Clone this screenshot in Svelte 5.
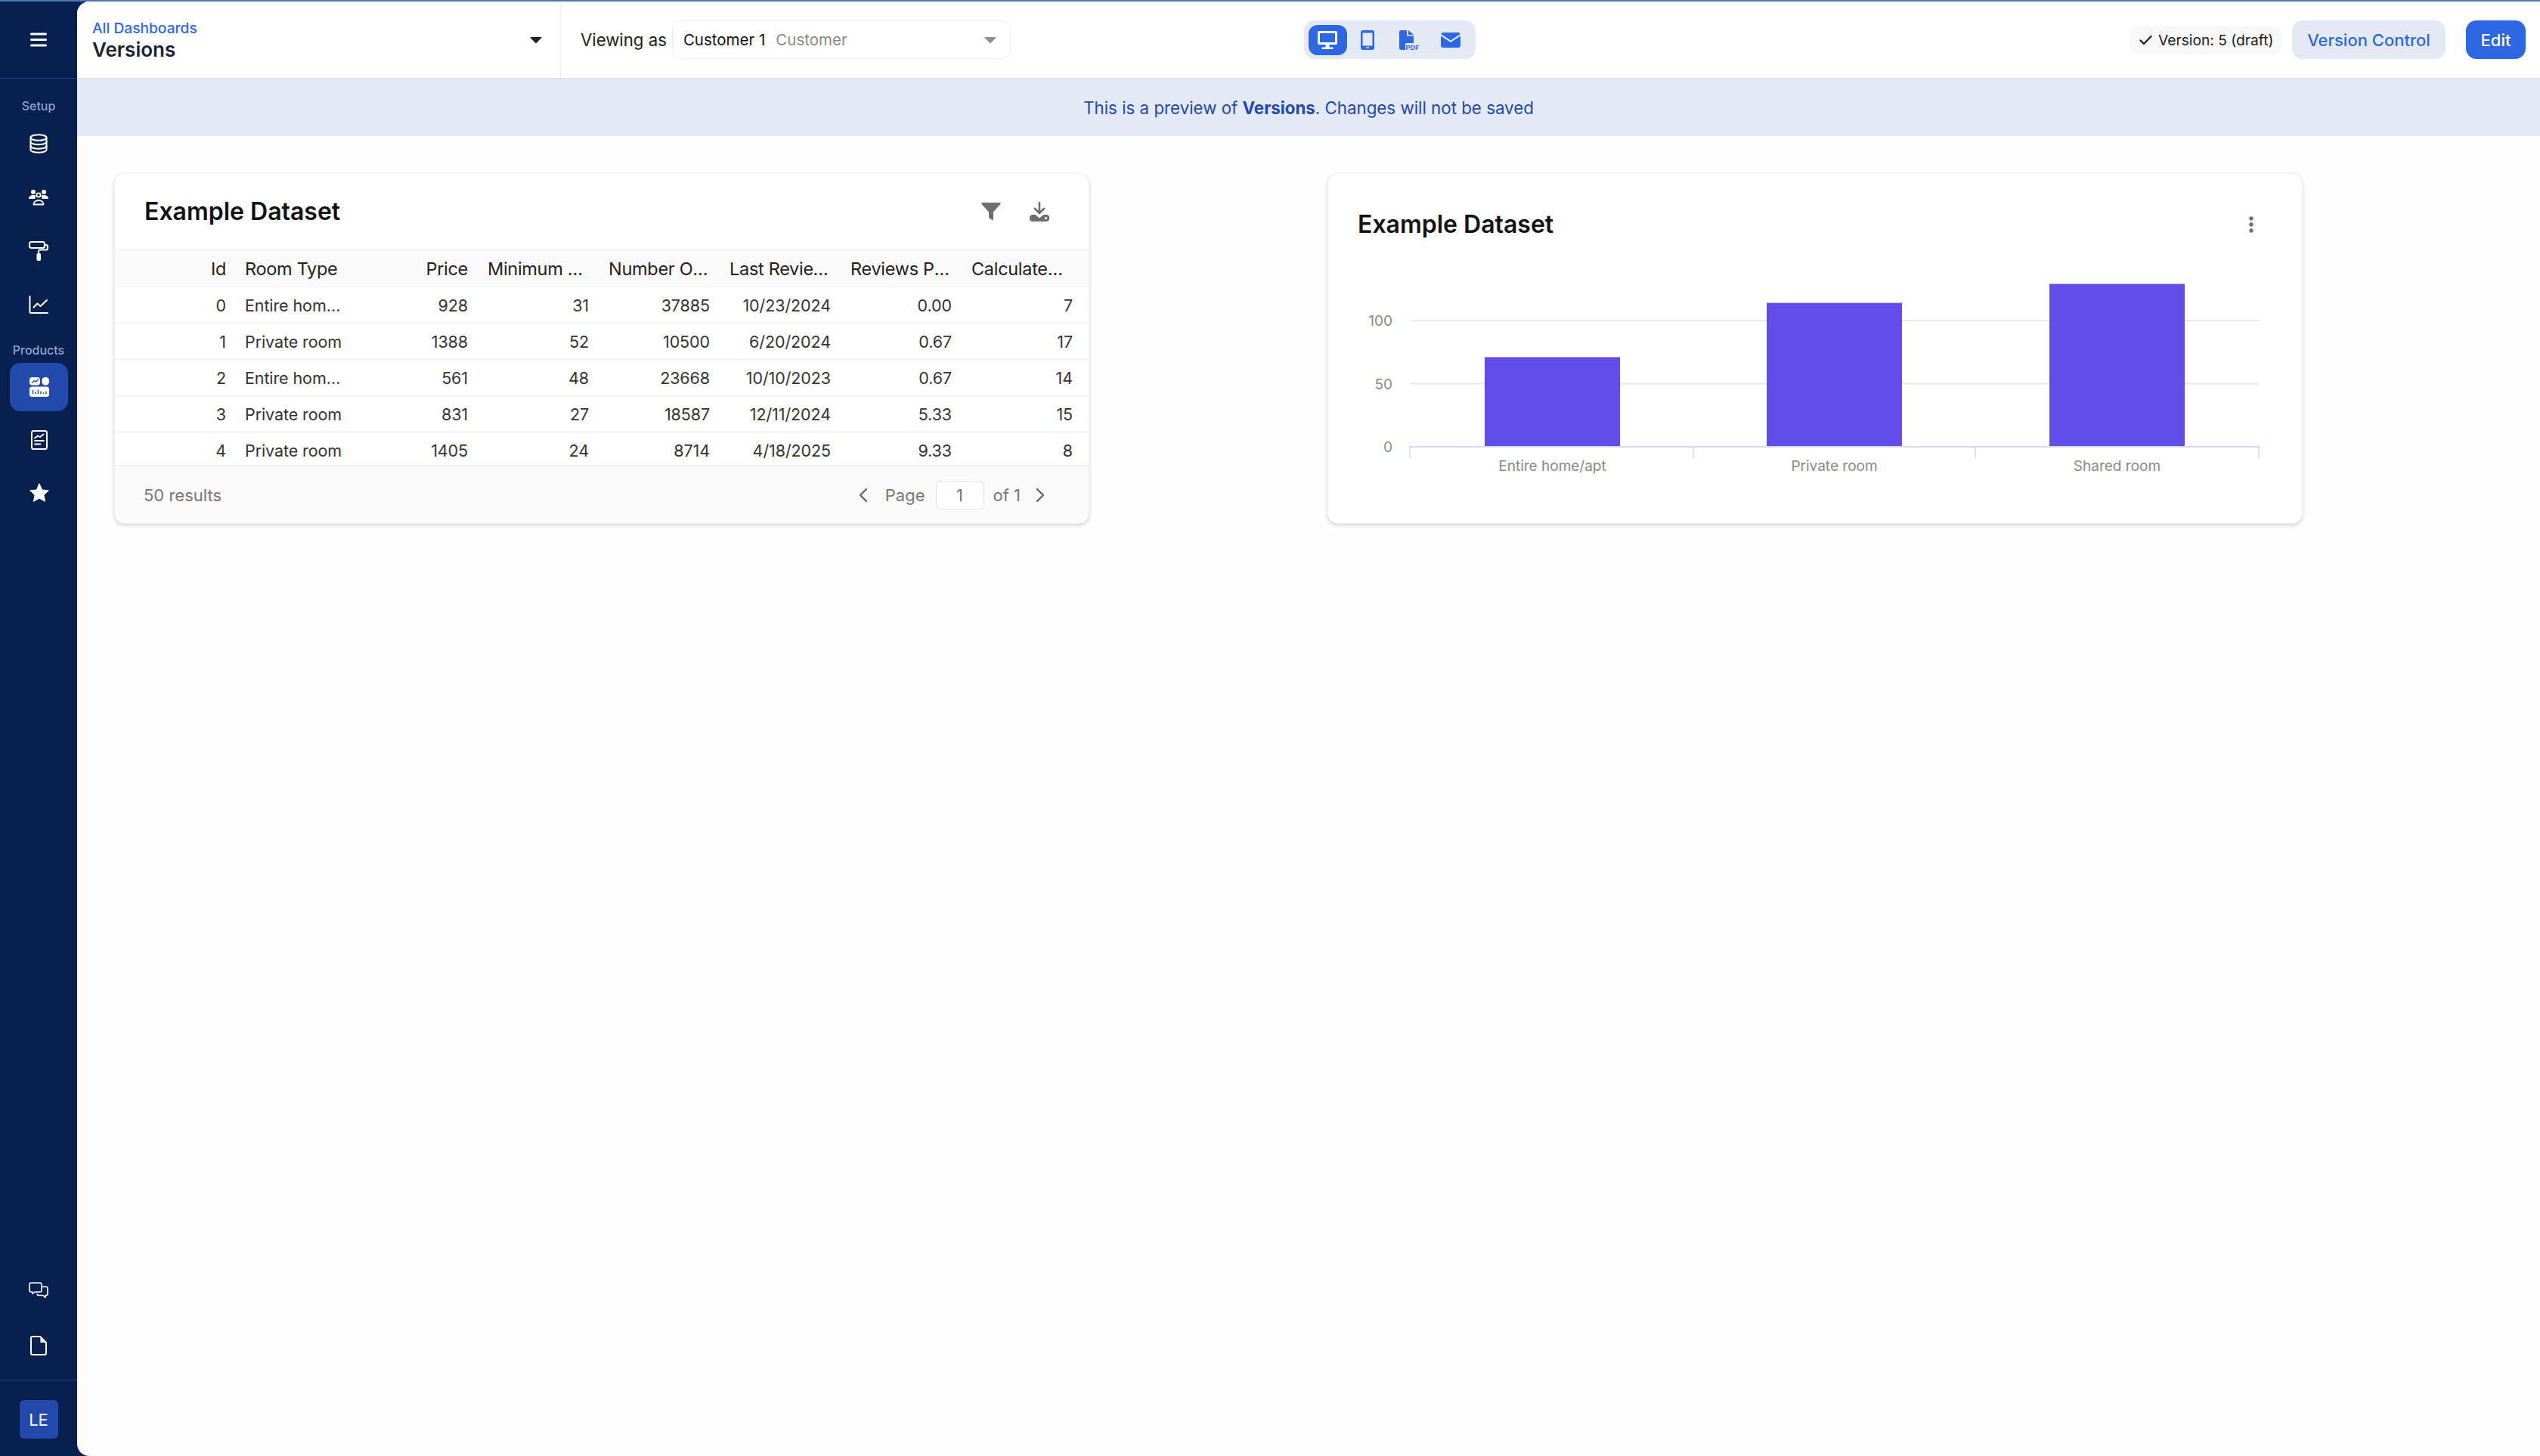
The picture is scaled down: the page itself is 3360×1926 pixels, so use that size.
<script lang="ts">
  const setupNav = ['db', 'people', 'roller', 'chart'];
  const productNav = ['dash', 'report', 'star'];

  const columns = [
    { label: 'Id', key: 'id' },
    { label: 'Room Type', key: 'room', left: true },
    { label: 'Price', key: 'price' },
    { label: 'Minimum Nights', key: 'nights' },
    { label: 'Number Of Reviews', key: 'reviews' },
    { label: 'Last Review Date', key: 'last' },
    { label: 'Reviews Per Month', key: 'perMonth' },
    { label: 'Calculated Host Listings', key: 'listings' },
  ];

  const rows = [
    { id: 0, room: 'Entire home/apt', price: 928, nights: 31, reviews: 37885, last: '10/23/2024', perMonth: '0.00', listings: 7 },
    { id: 1, room: 'Private room', price: 1388, nights: 52, reviews: 10500, last: '6/20/2024', perMonth: '0.67', listings: 17 },
    { id: 2, room: 'Entire home/apt', price: 561, nights: 48, reviews: 23668, last: '10/10/2023', perMonth: '0.67', listings: 14 },
    { id: 3, room: 'Private room', price: 831, nights: 27, reviews: 18587, last: '12/11/2024', perMonth: '5.33', listings: 15 },
    { id: 4, room: 'Private room', price: 1405, nights: 24, reviews: 8714, last: '4/18/2025', perMonth: '9.33', listings: 8 },
  ];

  // chart geometry, in svg units
  const baseY = 258;
  const perUnit = 1.67;
  const bars = [
    { label: 'Entire home/apt', value: 71, x: 207 },
    { label: 'Private room', value: 114, x: 580 },
    { label: 'Shared room', value: 129, x: 954 },
  ];
  const yTicks = [100, 50, 0];
  const xTicks = [108, 483, 856, 1231];
</script>

{#snippet navIcon(name: string)}
  <svg class="nav-icon" viewBox="0 0 26 26" fill="none" stroke="#fff" stroke-width="2" stroke-linecap="round" stroke-linejoin="round">
    {#if name === 'db'}
      <ellipse cx="13" cy="5" rx="10.5" ry="3.8" />
      <path d="M2.5 5v16c0 2.2 4.7 3.8 10.5 3.8s10.5-1.6 10.5-3.8V5" />
      <path d="M2.5 10.5c0 2.2 4.7 3.8 10.5 3.8s10.5-1.6 10.5-3.8M2.5 16c0 2.2 4.7 3.8 10.5 3.8s10.5-1.6 10.5-3.8" />
    {:else if name === 'people'}
      <circle cx="6" cy="6" r="3" fill="#fff" stroke="none" />
      <circle cx="20" cy="6" r="3" fill="#fff" stroke="none" />
      <path d="M0 15c0-3.5 2.5-5 6-5 1.6 0 2.8.4 3.6 1-.8.9-1.2 2.300-1.200 4z M26 15c0-3.500-2.500-5-6-5-1.600 0-2.800.4-3.600 1 .8.9 1.200 2.300 1.200 4z" fill="#fff" stroke="none" />
      <circle cx="13" cy="10" r="2.600" stroke-width="1.800" />
      <path d="M6.500 22.500c0-3.500 2.800-5.500 6.500-5.500s6.500 2 6.500 5.500z" stroke-width="1.800" />
    {:else if name === 'roller'}
      <rect x="1" y="1" width="20" height="8" rx="2.500" stroke-width="2.200" />
      <path d="M21 5h2a2 2 0 0 1 2 2v2.500a2 2 0 0 1-2 2h-8a2 2 0 0 0-2 2V16" stroke-width="2.200" />
      <rect x="10.500" y="16" width="5.500" height="10" rx="1.800" fill="#fff" stroke="none" />
    {:else if name === 'chart'}
      <path d="M1.500 2v20.500a1.500 1.500 0 0 0 1.500 1.500h22" />
      <path d="M6.500 16.500l5-5 4 3.500 8.500-8" />
    {:else if name === 'dash'}
      <rect x="0" y="0" width="14" height="10.500" rx="4" fill="#fff" stroke="none" />
      <path d="M3.500 7l3-2.500 2 1.500 3-3" stroke="#2249ab" stroke-width="1.500" />
      <rect x="16.500" y="0" width="9.500" height="10.500" rx="4.500" fill="#fff" stroke="none" />
      <rect x="0" y="12.500" width="26" height="13.500" rx="3.500" fill="#fff" stroke="none" />
      <path d="M4.500 22v-5M8 22v-3M11.500 22v-5.500M15 22v-3.500M18.500 22v-2M22 22v-3.500" stroke="#2249ab" stroke-width="1.400" stroke-linecap="butt" />
    {:else if name === 'report'}
      <rect x="3" y="1" width="20" height="24" rx="2.500" />
      <path d="M7 10.500l4-3 3 1.500 4.500-3.500" stroke-width="1.800" />
      <path d="M7 14h12M7 18.500h7.500" stroke-width="1.800" />
    {:else if name === 'star'}
      <path d="M13 1l3.700 7.900 8.600 1-6.400 5.900 1.700 8.500L13 20.100l-7.600 4.200 1.700-8.500L.7 9.900l8.600-1z" fill="#fff" stroke="#fff" stroke-width="1" />
    {:else if name === 'chat'}
      <path d="M3 1h12a2 2 0 0 1 2 2v8a2 2 0 0 1-2 2H8l-3 2.500V13H3a2 2 0 0 1-2-2V3a2 2 0 0 1 2-2z" stroke-width="1.600" />
      <path d="M18.500 6H23a2 2 0 0 1 2 2v7.500a2 2 0 0 1-2 2h-1v3l-3-3h-5.500a3 3 0 0 1-2.500-1.500" stroke-width="1.600" />
    {:else if name === 'doc'}
      <path d="M5 1h10l8 8v14a2 2 0 0 1-2 2H5a2 2 0 0 1-2-2V3a2 2 0 0 1 2-2z" />
      <path d="M15.500 1v8h7.500z" fill="#fff" stroke="none" />
    {/if}
  </svg>
{/snippet}

<div class="app">
  <aside class="sidebar">
    <div class="side-top">
      <svg class="burger" viewBox="0 0 22 19" fill="none" stroke="#fff" stroke-width="3" stroke-linecap="round">
        <path d="M1.500 2h19M1.500 9.500h19M1.500 17h19" />
      </svg>
    </div>
    <div class="side-label first">Setup</div>
    {#each setupNav as name}
      <div class="nav-item">{@render navIcon(name)}</div>
    {/each}
    <div class="side-label">Products</div>
    {#each productNav as name, i}
      <div class="nav-item" class:active={i === 0}>
        <span class="nav-box">{@render navIcon(name)}</span>
      </div>
    {/each}
    <div class="side-bottom">
      <div class="nav-item">{@render navIcon('chat')}</div>
      <div class="nav-item">{@render navIcon('doc')}</div>
      <div class="avatar-row">
        <span class="avatar">LE</span>
      </div>
    </div>
  </aside>

  <main class="panel">
    <header class="topbar">
      <div class="dash-picker">
        <div class="dash-names">
          <span class="crumb">All Dashboards</span>
          <span class="dash-name">Versions</span>
        </div>
        <svg class="caret" viewBox="0 0 16 10"><path d="M1 1h14a.6.6 0 0 1 .4 1L8.500 9a.7.7 0 0 1-1 0L.6 2A.6.6 0 0 1 1 1z" fill="#1c2330" /></svg>
      </div>
      <div class="viewing">
        <span class="viewing-label">Viewing as</span>
        <div class="customer-select">
          <span class="cust-name">Customer 1</span>
          <span class="cust-type">Customer</span>
          <svg class="select-caret" viewBox="0 0 16 10"><path d="M1 1h14a.6.6 0 0 1 .4 1L8.500 9a.7.7 0 0 1-1 0L.6 2A.6.6 0 0 1 1 1z" fill="#8f8f8f" /></svg>
        </div>
      </div>
      <div class="modes">
        <span class="mode active">
          <svg width="28" height="26" viewBox="0 0 28 26">
            <path fill-rule="evenodd" d="M3.500 1h21A2.500 2.500 0 0 1 27 3.500v13a2.500 2.500 0 0 1-2.500 2.500h-21A2.500 2.500 0 0 1 1 16.500v-13A2.500 2.500 0 0 1 3.500 1zM4 4v12h20V4z" fill="#fff" />
            <path d="M11.500 19h5v3.500h4a1 1 0 0 1 0 2.500h-13a1 1 0 0 1 0-2.500h4z" fill="#fff" />
          </svg>
        </span>
        <span class="mode">
          <svg width="18" height="26" viewBox="0 0 18 26">
            <path fill-rule="evenodd" d="M3 0h12a3 3 0 0 1 3 3v20a3 3 0 0 1-3 3H3a3 3 0 0 1-3-3V3a3 3 0 0 1 3-3zM2.500 3.500v17h13v-17zM7 22.300v1.400h4v-1.400z" fill="#2d67e4" />
          </svg>
        </span>
        <span class="mode">
          <svg width="26" height="26" viewBox="0 0 26 26">
            <path d="M2.500 0H10v7.500h9V17H9.500A1.500 1.500 0 0 0 8 18.500V26H2.500A2.500 2.500 0 0 1 0 23.500v-21A2.500 2.500 0 0 1 2.500 0z" fill="#2d67e4" />
            <path d="M12 0l7 6h-7z" fill="#2d67e4" />
            <text x="8.500" y="26" class="pdf-text">PDF</text>
          </svg>
        </span>
        <span class="mode">
          <svg width="26" height="20" viewBox="0 0 26 20">
            <path d="M3 0h20a3 3 0 0 1 2.800 2L13 10.500.2 2A3 3 0 0 1 3 0z" fill="#2d67e4" />
            <path d="M0 4.500l13 8.500 13-8.500V17a3 3 0 0 1-3 3H3a3 3 0 0 1-3-3z" fill="#2d67e4" />
          </svg>
        </span>
      </div>
      <div class="actions">
        <span class="version-pill">
          <svg width="17" height="14" viewBox="0 0 17 14" fill="none" stroke="#1c1c1c" stroke-width="2.200" stroke-linecap="round" stroke-linejoin="round"><path d="M1.500 7.500l4.500 4.500L15.500 2" /></svg>
          Version: 5 (draft)
        </span>
        <button class="btn soft">Version Control</button>
        <button class="btn solid">Edit</button>
      </div>
    </header>

    <div class="banner">This is a preview of <strong>Versions</strong>. Changes will not be saved</div>

    <div class="content">
      <section class="card">
        <div class="card-head table-head">
          <h2>Example Dataset</h2>
          <div class="card-tools">
            <svg width="26" height="24" viewBox="0 0 26 24"><path d="M1.500 0h23A1.200 1.200 0 0 1 25.400 2L16 12.500V22a1.200 1.200 0 0 1-1.800 1L10.800 20.500a1.500 1.500 0 0 1-.8-1.300v-6.700L.6 2A1.200 1.200 0 0 1 1.500 0z" fill="#6f6f6f" /></svg>
            <svg width="26" height="26" viewBox="0 0 26 26">
              <path d="M13 1v13M7 9l6 6 6-6" fill="none" stroke="#6f6f6f" stroke-width="2.600" stroke-linecap="round" stroke-linejoin="round" />
              <path fill-rule="evenodd" d="M4 17h3.500l5.500 4.500 5.500-4.500H22a4 4 0 0 1 0 9H4a4 4 0 0 1 0-8.900zM21.500 20a1.600 1.600 0 1 0 0 3.200 1.600 1.600 0 0 0 0-3.200z" fill="#6f6f6f" />
            </svg>
          </div>
        </div>
        <div class="grid-row grid-header">
          {#each columns as col}
            <div class="cell" class:left={col.left}>{col.label}</div>
          {/each}
        </div>
        <div class="grid-body">
          {#each rows as row}
            <div class="grid-row">
              {#each columns as col}
                <div class="cell" class:left={col.left}>{row[col.key]}</div>
              {/each}
            </div>
          {/each}
        </div>
        <div class="table-foot">
          <span class="results">50 results</span>
          <div class="pager">
            <svg width="12" height="20" viewBox="0 0 12 20" fill="none" stroke="#666" stroke-width="2.400" stroke-linecap="round" stroke-linejoin="round"><path d="M10 2L2 10l8 8" /></svg>
            <span class="page-word">Page</span>
            <span class="page-input">1</span>
            <span class="page-of">of 1</span>
            <svg width="12" height="20" viewBox="0 0 12 20" fill="none" stroke="#666" stroke-width="2.400" stroke-linecap="round" stroke-linejoin="round"><path d="M2 2l8 8-8 8" /></svg>
          </div>
        </div>
      </section>

      <section class="card">
        <div class="card-head chart-head">
          <h2>Example Dataset</h2>
          <svg width="8" height="22" viewBox="0 0 8 22" fill="#6f6f6f"><circle cx="4" cy="3" r="2.700" /><circle cx="4" cy="11" r="2.700" /><circle cx="4" cy="19" r="2.700" /></svg>
        </div>
        <svg class="chart" width="1288" height="330" viewBox="0 0 1288 330">
          {#each yTicks as t}
            <text class="axis-text" x="85" y={baseY - t * perUnit + 7} text-anchor="end">{t}</text>
            {#if t > 0}
              <line x1="108" x2="1231" y1={baseY - t * perUnit} y2={baseY - t * perUnit} stroke="#e9e9ec" stroke-width="2" />
            {/if}
          {/each}
          {#each bars as b}
            <rect x={b.x} y={baseY - b.value * perUnit} width="179" height={b.value * perUnit} fill="#624de8" />
            <text class="axis-text" x={b.x + 89.500} y="290" text-anchor="middle">{b.label}</text>
          {/each}
          <line x1="107" x2="1232" y1={baseY} y2={baseY} stroke="#d3daec" stroke-width="2" />
          {#each xTicks as x}
            <line x1={x} x2={x} y1={baseY} y2={baseY + 15} stroke="#d3daec" stroke-width="1.500" />
          {/each}
        </svg>
      </section>
    </div>
  </main>
</div>

<style>
  :global(body) {
    margin: 0;
    background: #07204d;
    font-family: Inter, 'Liberation Sans', sans-serif;
  }
  .app {
    display: flex;
    height: 1926px;
    box-sizing: border-box;
    border-top: 2px solid #4f78b0;
    overflow: hidden;
    background: #07204d;
  }

  .sidebar {
    width: 102px;
    flex-shrink: 0;
    display: flex;
    flex-direction: column;
    align-items: stretch;
  }
  .side-top {
    height: 101px;
    display: flex;
    align-items: center;
    justify-content: center;
    border-bottom: 1px solid #1d3f8a;
  }
  .burger {
    width: 22px;
    height: 19px;
  }
  .side-label {
    height: 28px;
    margin-top: 11px;
    display: flex;
    align-items: center;
    justify-content: center;
    font-size: 16px;
    font-weight: 500;
    color: #8ba6d4;
  }
  .side-label.first {
    margin-top: 22px;
  }
  .nav-item {
    height: 71px;
    display: flex;
    align-items: center;
    justify-content: center;
  }
  .nav-item:has(.nav-box):not(.active) {
    margin-top: -1px;
  }
  .nav-box {
    width: 77px;
    height: 64px;
    margin-left: 1px;
    border-radius: 14px;
    display: flex;
    align-items: center;
    justify-content: center;
  }
  .nav-item.active {
    margin-top: -1px;
  }
  .nav-item.active .nav-box {
    background: #2249ab;
  }
  .nav-icon {
    width: 26px;
    height: 26px;
    overflow: visible;
  }
  .side-bottom {
    margin-top: auto;
  }
  .avatar-row {
    height: 101px;
    box-sizing: border-box;
    margin-top: 10px;
    padding-top: 26px;
    display: flex;
    justify-content: center;
    border-top: 1px solid #1d3f8a;
  }
  .avatar {
    width: 51px;
    height: 51px;
    border-radius: 6px;
    background: #2249ab;
    color: #fff;
    font-size: 22px;
    display: flex;
    align-items: center;
    justify-content: center;
  }

  .panel {
    flex: 1;
    min-width: 0;
    background: #fdfdfd;
    border-radius: 16px 0 0 16px;
    overflow: hidden;
  }

  .topbar {
    height: 102px;
    box-sizing: border-box;
    background: #fff;
    border-bottom: 1px solid #d9dadc;
    display: flex;
    align-items: center;
  }
  .dash-picker {
    width: 640px;
    height: 100%;
    box-sizing: border-box;
    padding: 0 24px 0 20px;
    border-right: 1px solid #ececec;
    display: flex;
    align-items: center;
    justify-content: space-between;
  }
  .dash-names {
    display: flex;
    flex-direction: column;
  }
  .crumb {
    font-size: 19.2px;
    line-height: 26px;
    font-weight: 500;
    color: #2d67e4;
  }
  .dash-name {
    font-size: 26px;
    line-height: 32px;
    font-weight: 600;
    color: #1c2330;
  }
  .caret {
    width: 16px;
    height: 10px;
  }
  .viewing {
    display: flex;
    align-items: center;
    margin-left: 26px;
    gap: 7px;
  }
  .viewing-label {
    font-size: 22.2px;
    color: #222;
  }
  .customer-select {
    width: 448px;
    height: 51px;
    box-sizing: border-box;
    border: 1px solid #eeeeee;
    border-radius: 12px;
    padding: 0 18px 0 14px;
    display: flex;
    align-items: center;
    gap: 14px;
    font-size: 20.5px;
  }
  .cust-name {
    color: #111;
  }
  .cust-type {
    color: #8a8a8a;
  }
  .select-caret {
    width: 16px;
    height: 10px;
    margin-left: auto;
  }
  .modes {
    margin-left: 388px;
    width: 227px;
    height: 51px;
    box-sizing: border-box;
    padding: 0 6px;
    border-radius: 14px;
    background: #e3eaf6;
    display: flex;
    align-items: center;
  }
  .mode {
    width: 55px;
    height: 40px;
    border-radius: 12px;
    display: flex;
    align-items: center;
    justify-content: center;
  }
  .mode.active {
    width: 51px;
    background: #2d67e4;
  }
  .pdf-text {
    font-family: 'Liberation Sans', sans-serif;
    font-size: 9px;
    font-weight: 700;
    fill: #2d67e4;
  }
  .actions {
    margin-left: auto;
    padding-right: 19px;
    display: flex;
    align-items: center;
  }
  .version-pill {
    height: 38px;
    width: 202px;
    box-sizing: border-box;
    padding: 0 0 0 13px;
    border-radius: 12px;
    background: #f8f8f8;
    display: flex;
    align-items: center;
    gap: 8px;
    font-size: 19.2px;
    color: #1c1c1c;
  }
  .btn {
    height: 51px;
    border: none;
    border-radius: 14px;
    font-family: inherit;
    font-size: 22px;
    font-weight: 500;
  }
  .btn.soft {
    width: 203px;
    margin-left: 13px;
    background: #e3eaf6;
    color: #2d67e4;
  }
  .btn.solid {
    width: 79px;
    margin-left: 27px;
    background: #2d67e4;
    color: #fff;
  }

  .banner {
    height: 76px;
    background: #e3eaf6;
    display: flex;
    align-items: center;
    justify-content: center;
    white-space: pre;
    font-size: 22.3px;
    color: #2347b0;
  }
  .banner strong {
    font-weight: 700;
  }

  .content {
    padding: 49px 0 0 49px;
    display: grid;
    grid-template-columns: 1290px 1290px;
    column-gap: 315px;
  }
  .card {
    height: 464px;
    box-sizing: border-box;
    background: #fff;
    border: 1px solid #f0f0f0;
    border-radius: 14px;
    box-shadow: 0 2px 5px rgba(0, 0, 0, 0.16);
    overflow: hidden;
    color: #111;
  }
  .card-head {
    display: flex;
    align-items: center;
    justify-content: space-between;
    box-sizing: border-box;
  }
  .card-head h2 {
    margin: 0;
    font-size: 32px;
    line-height: 40px;
    font-weight: 600;
    color: #111;
  }
  .table-head {
    height: 100px;
    padding: 0 52px 0 39px;
  }
  .chart-head {
    height: 103px;
    padding: 30px 63px 0 39px;
  }
  .card-tools {
    display: flex;
    align-items: center;
    gap: 38px;
  }

  .grid-row {
    display: grid;
    grid-template-columns: repeat(8, 160px);
    height: 48px;
    align-items: center;
    box-sizing: border-box;
    border-bottom: 1px solid #eeeeee;
    color: #333;
    font-size: 21.5px;
    letter-spacing: -0.1px;
  }
  .grid-header {
    height: 50px;
    background: #fafafa;
    border-top: 1px solid #ececec;
    color: #222;
    font-size: 23.5px;
    letter-spacing: -0.3px;
  }
  .grid-body {
    height: 236px;
    overflow: hidden;
    border-bottom: 1px solid #eeeeee;
    box-sizing: border-box;
  }
  .cell {
    padding: 0 13px;
    text-align: right;
    white-space: nowrap;
    overflow: hidden;
    text-overflow: ellipsis;
  }
  .cell.left {
    padding-left: 12px;
    text-align: left;
  }

  .table-foot {
    height: 77px;
    background: #fafafa;
    display: flex;
    align-items: center;
    justify-content: space-between;
    padding: 0 58px 2px 38px;
    font-size: 22px;
    color: #777;
  }
  .pager {
    display: flex;
    align-items: center;
  }
  .page-word {
    margin-left: 23px;
  }
  .page-input {
    width: 64px;
    height: 38px;
    margin-left: 14px;
    box-sizing: border-box;
    border: 1px solid #e2e2e2;
    border-radius: 7px;
    background: #fff;
    display: flex;
    align-items: center;
    justify-content: center;
  }
  .page-of {
    margin: 0 20px 0 12px;
  }

  .chart {
    display: block;
  }
  .axis-text {
    font-size: 19px;
    fill: #8a8a8a;
  }
</style>
